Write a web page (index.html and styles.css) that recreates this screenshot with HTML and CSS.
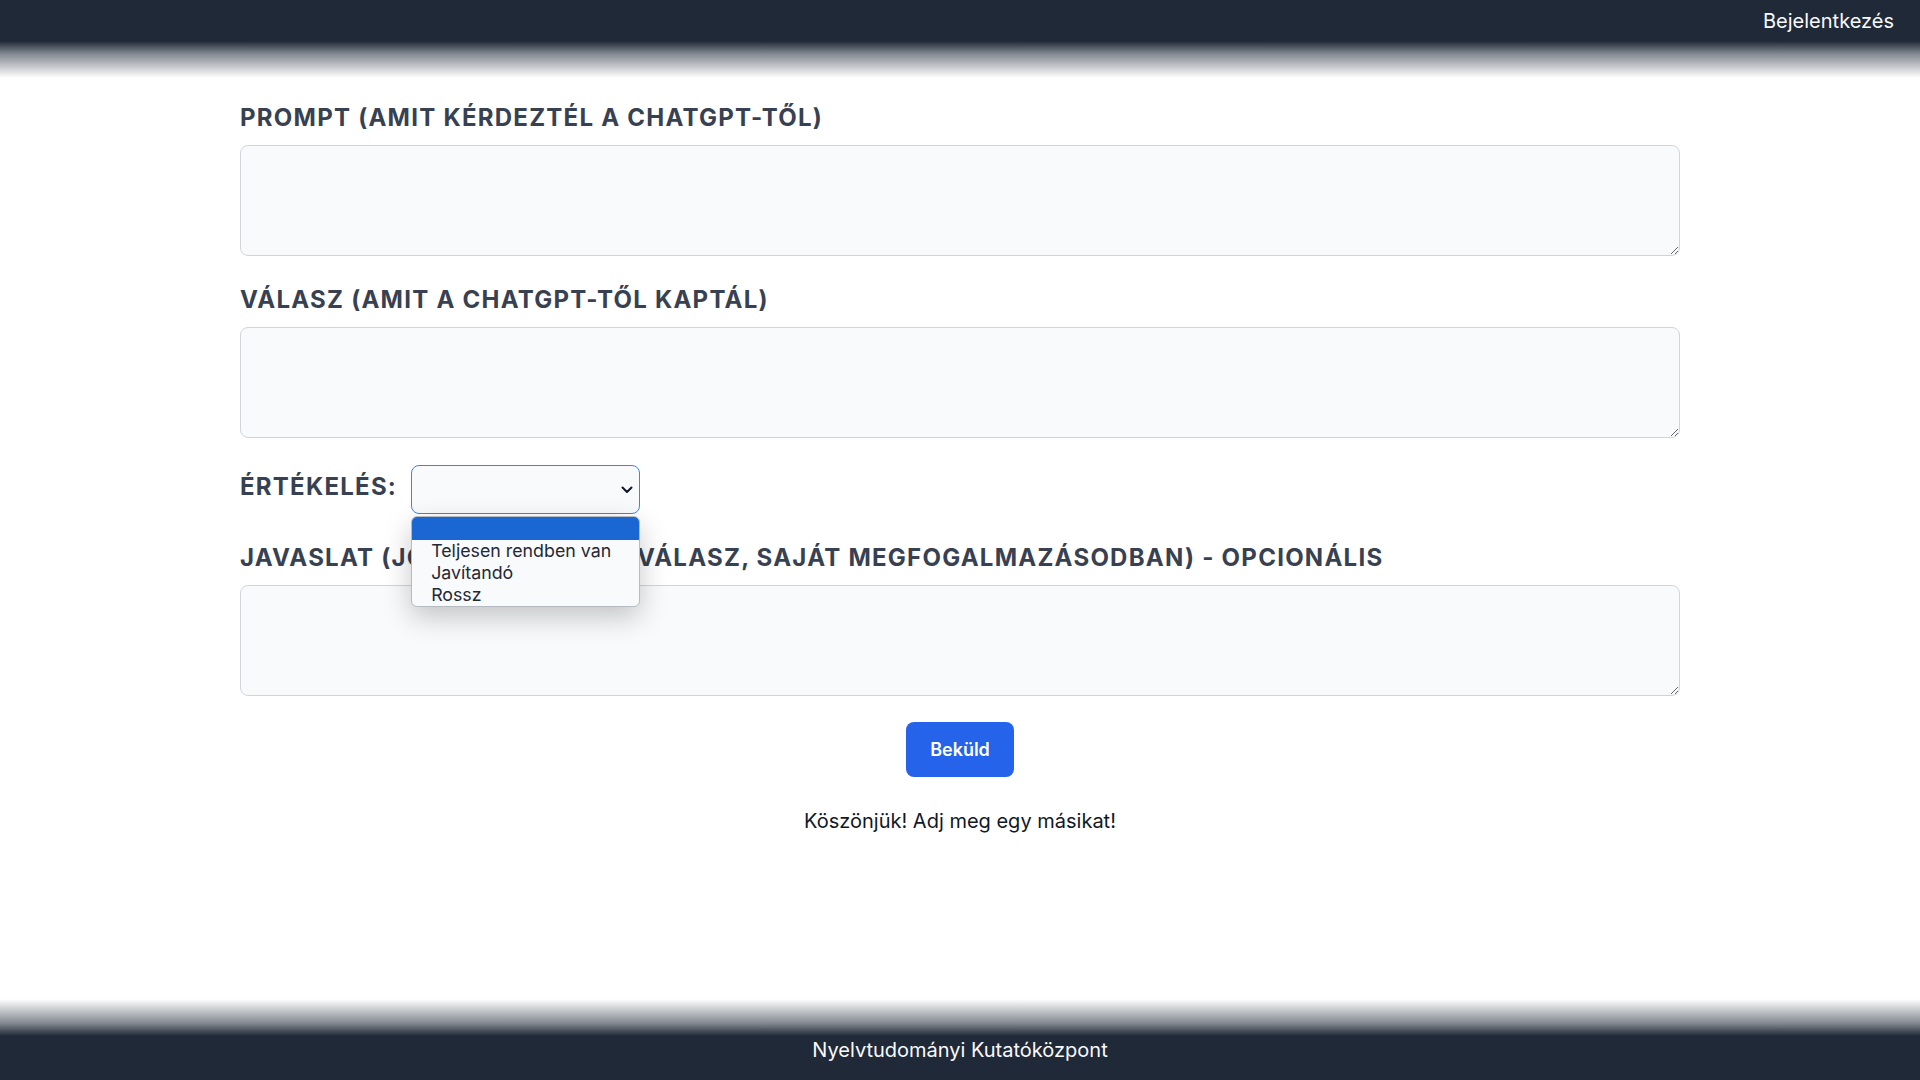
FILE: index.html
```html
<!DOCTYPE html>
<html lang="hu">
<head>
<meta charset="utf-8">
<title>Értékelés</title>
<link rel="stylesheet" href="styles.css">
</head>
<body>
<header class="topbar">
  <a class="login" href="#">Bejelentkezés</a>
</header>
<div class="fade-down"></div>

<main class="content">
  <form class="form">
    <div class="field">
      <label class="label" for="prompt">Prompt (amit kérdeztél a ChatGPT-től)</label>
      <textarea id="prompt" class="area"></textarea>
    </div>
    <div class="field">
      <label class="label" for="answer">Válasz (amit a ChatGPT-től kaptál)</label>
      <textarea id="answer" class="area"></textarea>
    </div>
    <div class="rating-row">
      <span class="label">Értékelés:</span>
      <div class="select-wrap">
        <div class="select-box">
          <svg class="chevron" width="12" height="8" viewBox="0 0 12 8"><path d="M1.5 1.5 L6 6 L10.5 1.5" fill="none" stroke="#111827" stroke-width="2" stroke-linecap="round" stroke-linejoin="round"/></svg>
        </div>
        <ul class="listbox">
          <li class="opt active">&nbsp;</li>
          <li class="opt">Teljesen rendben van</li>
          <li class="opt">Javítandó</li>
          <li class="opt">Rossz</li>
        </ul>
      </div>
    </div>
    <div class="field">
      <label class="label" for="suggest">Javaslat (jobb pontosabb válasz, saját megfogalmazásodban) - opcionális</label>
      <textarea id="suggest" class="area"></textarea>
    </div>
    <div class="actions">
      <button type="button" class="btn">Beküld</button>
    </div>
    <p class="thanks">Köszönjük! Adj meg egy másikat!</p>
  </form>
</main>

<div class="fade-up"></div>
<footer class="bottombar">Nyelvtudományi Kutatóközpont</footer>
</body>
</html>
```

FILE: styles.css
```css
* { box-sizing: border-box; }

html, body {
  margin: 0;
  padding: 0;
}

body {
  font-family: Inter, "Noto Sans", "DejaVu Sans", sans-serif;
  background: #ffffff;
  color: #111827;
  min-height: 100vh;
  display: flex;
  flex-direction: column;
}

.topbar {
  height: 41px;
  background: #1f2937;
  display: flex;
  align-items: center;
  justify-content: flex-end;
  padding: 0 26px 0 0;
}

.login {
  color: #f9fafb;
  text-decoration: none;
  font-size: 20px;
  line-height: 28px;
}

.fade-down {
  height: 37px;
  background: linear-gradient(to bottom, #1f2937 0%, rgba(31, 41, 55, 0.55) 35%, rgba(31, 41, 55, 0) 100%);
}

.fade-up {
  height: 37px;
  background: linear-gradient(to top, #1f2937 0%, rgba(31, 41, 55, 0.55) 35%, rgba(31, 41, 55, 0) 100%);
}

.content {
  flex: 1;
  width: 1440px;
  margin: 0 auto;
  padding-top: 23px;
}

.form {
  display: flex;
  flex-direction: column;
}

.field {
  display: flex;
  flex-direction: column;
  margin-bottom: 27px;
}

.label {
  display: block;
  font-size: 24px;
  line-height: 32px;
  font-weight: 700;
  text-transform: uppercase;
  letter-spacing: 0.052em;
  color: #374151;
  margin-bottom: 11px;
  padding-top: 1px;
}

.area {
  display: block;
  width: 100%;
  height: 111px;
  background: #f9fafb;
  border: 1px solid #d1d5db;
  border-radius: 8px;
  resize: vertical;
  font-family: inherit;
  font-size: 16px;
  padding: 10px;
  outline: none;
}

.rating-row {
  display: flex;
  align-items: center;
  gap: 14px;
  margin-bottom: 27px;
}

.rating-row .label {
  margin-bottom: 0;
  padding-top: 0;
  padding-bottom: 5px;
}

.select-wrap {
  position: relative;
  width: 229px;
}

.select-box {
  height: 49px;
  background: #f9fafb;
  border: 1px solid #3b82f6;
  border-radius: 8px;
  display: flex;
  align-items: center;
  justify-content: flex-end;
  padding-right: 6px;
}

.chevron {
  display: block;
}

.listbox {
  position: absolute;
  left: 0;
  top: 51px;
  width: 229px;
  margin: 0;
  padding: 0;
  list-style: none;
  background: #f9fafb;
  border: 1px solid #b6bac1;
  border-radius: 6px;
  box-shadow: 0 10px 28px rgba(0, 0, 0, 0.22);
  overflow: hidden;
  z-index: 10;
}

.opt {
  font-size: 17.8px;
  line-height: 22px;
  height: 22px;
  padding-left: 19px;
  color: #1f2937;
  white-space: nowrap;
}

.opt.active {
  background: #1a66d2;
  height: 23px;
}

.actions {
  display: flex;
  justify-content: center;
  margin-top: -1px;
}

.btn {
  background: #2563eb;
  color: #ffffff;
  border: none;
  border-radius: 8px;
  font-family: inherit;
  font-size: 18px;
  font-weight: 600;
  line-height: 23px;
  padding: 16px 24px;
  cursor: pointer;
}

.thanks {
  text-align: center;
  font-size: 20px;
  line-height: 28px;
  margin: 30px 0 0 0;
  color: #111827;
}

.bottombar {
  height: 44px;
  background: #1f2937;
  color: #f9fafb;
  text-align: center;
  font-size: 20px;
  line-height: 28px;
  padding-top: 0;
}
```
